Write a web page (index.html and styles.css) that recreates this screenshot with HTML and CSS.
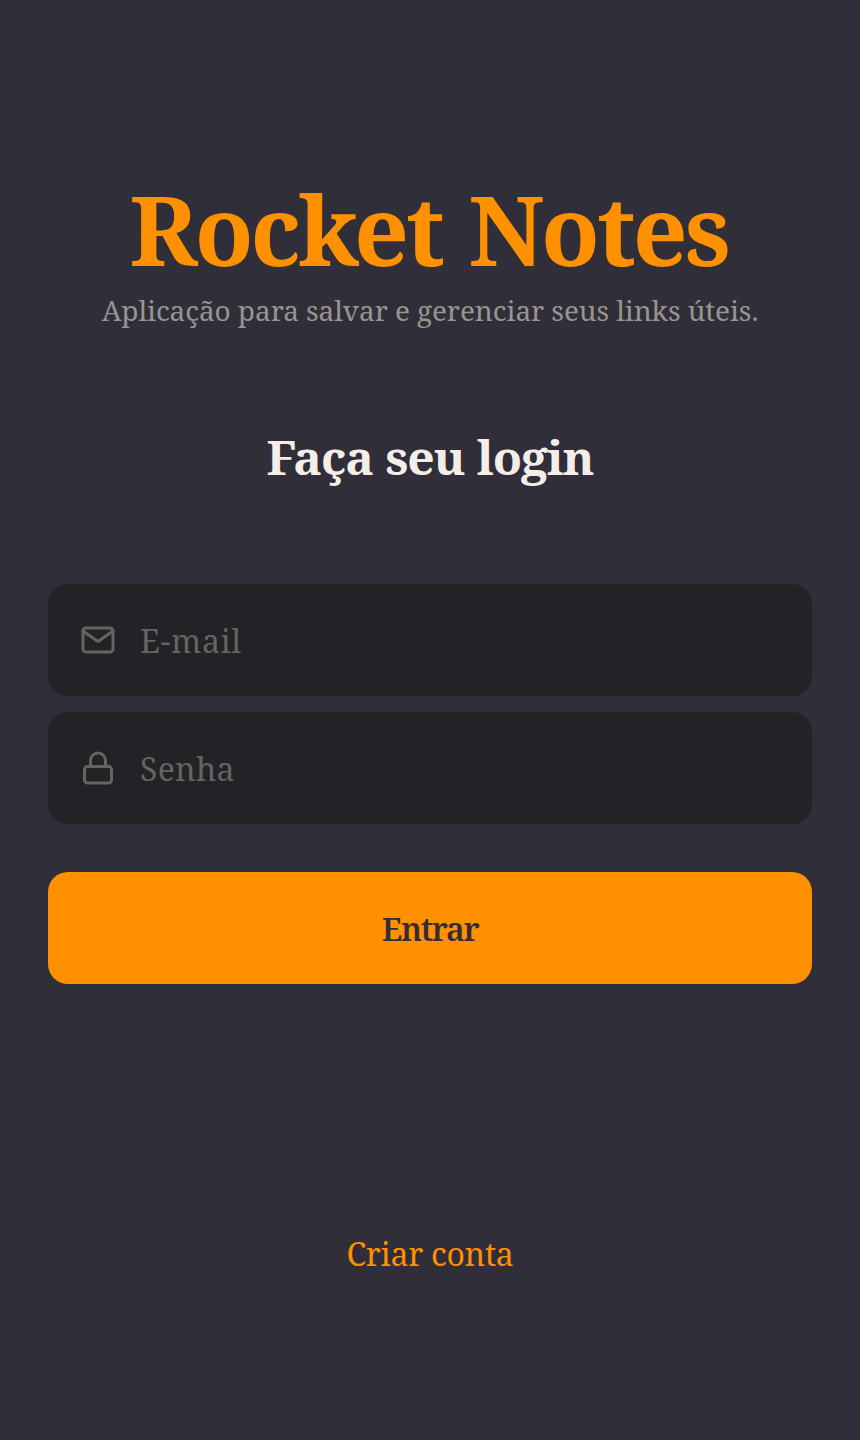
FILE: index.html
```
<!DOCTYPE html>
<html lang="pt-BR">
<head>
<meta charset="utf-8">
<title>Rocket Notes</title>
<link rel="stylesheet" href="styles.css">
</head>
<body>
<main class="page">
  <header class="brand">
    <h1 class="brand-title">Rocket Notes</h1>
    <p class="brand-text">Aplicação para salvar e gerenciar seus links úteis.</p>
  </header>
  <form class="form">
    <h2 class="form-title">Faça seu login</h2>
    <label class="field">
      <svg class="icon" viewBox="0 0 24 24"><path d="M4 4h16c1.1 0 2 .9 2 2v12c0 1.1-.9 2-2 2H4c-1.1 0-2-.9-2-2V6c0-1.1.9-2 2-2z"/><path d="M22 6l-10 7L2 6"/></svg>
      <input class="input input-email" type="text" placeholder="E-mail">
    </label>
    <label class="field">
      <svg class="icon" viewBox="0 0 24 24"><rect x="3" y="11" width="18" height="11" rx="2"/><path d="M7 11V7a5 5 0 0 1 10 0v4"/></svg>
      <input class="input input-password" type="password" placeholder="Senha">
    </label>
    <button class="button" type="button">Entrar</button>
  </form>
  <a class="link" href="#">Criar conta</a>
</main>
</body>
</html>
```
FILE: styles.css
```
* { box-sizing: border-box; margin: 0; padding: 0; }
body {
  background: #302e38;
  font-family: "Roboto Slab", "Noto Serif", "DejaVu Serif", serif;
}
.page {
  height: 1440px;
  padding: 165px 48px 0;
  display: flex;
  flex-direction: column;
  align-items: center;
}
.brand { text-align: center; white-space: nowrap; }
.brand-title { margin-left: -3px; font-size: 96px; line-height: 127px; letter-spacing: -3.1px; word-spacing: 5px; color: #ff9000; }
.brand-text { font-size: 28px; line-height: 37px; letter-spacing: -0.09px; color: #98958f; }
.form { width: 100%; display: flex; flex-direction: column; padding-top: 96px; }
.form-title { font-size: 48px; line-height: 63px; letter-spacing: -1.1px; word-spacing: 1px; color: #f4ede8; text-align: center; margin-bottom: 96px; }
.field {
  height: 112px;
  display: flex;
  align-items: center;
  gap: 24px;
  padding: 0 32px;
  margin-bottom: 16px;
  border-radius: 20px;
  background: #232227;
}
.icon { width: 36px; height: 36px; fill: none; stroke: #65645f; stroke-width: 2; stroke-linecap: round; stroke-linejoin: round; }
.input { flex: 1; min-width: 0; height: 46px; padding-top: 1px; border: 0; outline: 0; background: none; font: 32px/42px "Roboto Slab", "Noto Serif", "DejaVu Serif", serif; color: #fff; }
.input-email { letter-spacing: 0.6px; }
.input-password { letter-spacing: 0.25px; }
.input::placeholder { color: #65645f; opacity: 1; }
.button { height: 112px; margin-top: 32px; padding-top: 2px; border: 0; border-radius: 20px; background: #ff9000; color: #312e38; font: 600 32px/42px "Roboto Slab", "Noto Serif", "DejaVu Serif", serif; letter-spacing: -1.3px; }
.link { margin-top: 249px; font-size: 32px; line-height: 42px; letter-spacing: -0.3px; color: #ff9000; text-decoration: none; }
```
